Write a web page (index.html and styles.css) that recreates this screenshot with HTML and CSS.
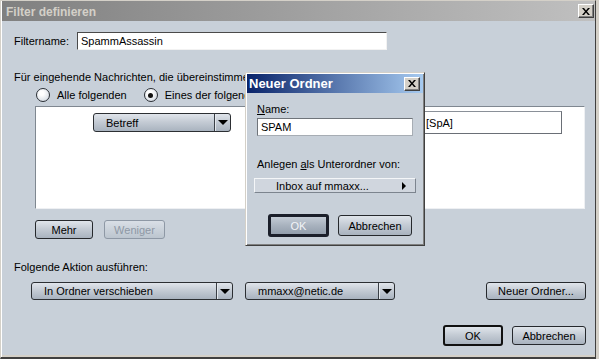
FILE: index.html
```html
<!DOCTYPE html>
<html lang="de">
<head>
    <meta charset="UTF-8">
    <title>Filter definieren</title>
    <link rel="stylesheet" href="styles.css">
</head>
<body>
    <div class="window">
        <div class="titlebar">
            <span class="title">Filter definieren</span>
            <button class="close-btn">
                <svg width="8" height="7" viewBox="0 0 8 7"><path d="M0 0h2l2 2.5L6 0h2L5 3.5 8 7H6L4 4.5 2 7H0l3-3.5z" fill="#000"/></svg>
            </button>
        </div>
        <div class="content">
            <div class="name-row">
                <label class="name-label">Filtername:</label>
                <div class="text-field name-field">SpammAssassin</div>
            </div>
            <p class="intro">Für eingehende Nachrichten, die übereinstimmen:</p>
            <div class="radio-row">
                <span class="radio"></span><span class="radio-label">Alle folgenden</span>
                <span class="radio checked"></span><span class="radio-label">Eines der folgenden</span>
            </div>
            <div class="rule-list">
                <div class="rule-row">
                    <div class="dropdown betreff-drop">
                        <span class="drop-text">Betreff</span>
                        <span class="drop-arrow"></span>
                    </div>
                    <div class="text-field value-field">[SpA]</div>
                </div>
            </div>
            <div class="button-row">
                <button class="btn mehr-btn">Mehr</button>
                <button class="btn weniger-btn disabled">Weniger</button>
            </div>
            <p class="action-label">Folgende Aktion ausführen:</p>
            <div class="action-row">
                <div class="dropdown action-drop">
                    <span class="drop-text">In Ordner verschieben</span>
                    <span class="drop-arrow"></span>
                </div>
                <div class="dropdown account-drop">
                    <span class="drop-text">mmaxx@netic.de</span>
                    <span class="drop-arrow"></span>
                </div>
                <button class="btn new-folder-btn">Neuer Ordner...</button>
            </div>
            <div class="footer">
                <button class="btn default-btn ok-btn">OK</button>
                <button class="btn cancel-btn">Abbrechen</button>
            </div>
        </div>

        <div class="dialog">
            <div class="dialog-titlebar">
                <span class="dialog-title">Neuer Ordner</span>
                <button class="close-btn">
                    <svg width="8" height="7" viewBox="0 0 8 7"><path d="M0 0h2l2 2.5L6 0h2L5 3.5 8 7H6L4 4.5 2 7H0l3-3.5z" fill="#000"/></svg>
                </button>
            </div>
            <div class="dialog-body">
                <p class="dialog-label"><u>N</u>ame:</p>
                <div class="text-field folder-field">SPAM</div>
                <p class="dialog-label parent-label">Anlegen <u>a</u>ls Unterordner von:</p>
                <div class="folder-picker">
                    <span>Inbox auf mmaxx...</span>
                    <span class="picker-arrow"></span>
                </div>
                <div class="dialog-buttons">
                    <button class="btn dialog-ok">OK</button>
                    <button class="btn dialog-cancel">Abbrechen</button>
                </div>
            </div>
        </div>
    </div>
</body>
</html>
```

FILE: styles.css
```css
* {
    box-sizing: border-box;
}
body {
    margin: 0;
    background-color: #d4d0c8;
    font-family: "Liberation Sans", Arial, sans-serif;
    font-size: 11px;
    color: #000;
}
p {
    margin: 0;
}
button {
    font-family: inherit;
    font-size: 11px;
    padding: 0;
    margin: 0;
    color: #000;
}
.window {
    position: relative;
    width: 596px;
    height: 359px;
    padding-left: 1px;
    background-color: #c8d0d9;
    border-style: solid;
    border-width: 1px 1px 2px 1px;
    border-color: #d4d0c8 #404040 #404040 #d4d0c8;
    box-shadow: inset 1px 0 #fff, inset 0 -2px #d4d0c8;
    display: flex;
    flex-direction: column;
}
.titlebar {
    height: 20px;
    display: flex;
    align-items: center;
    justify-content: space-between;
    padding: 0 1px 0 4px;
    background: linear-gradient(to right, #808080, #c0c0c0);
}
.title {
    color: #d4d0c8;
    font-weight: bold;
    font-size: 12px;
    padding-top: 1px;
}
.close-btn {
    width: 16px;
    height: 14px;
    display: flex;
    align-items: center;
    justify-content: center;
    background-color: #d4d0c8;
    border: 1px solid;
    border-color: #fff #404040 #404040 #fff;
    box-shadow: inset -1px -1px #808080;
}
.content {
    display: flex;
    flex-direction: column;
    padding: 0 9px 0 12px;
}
.name-row {
    display: flex;
    align-items: center;
    margin-top: 11px;
    height: 18px;
}
.name-label {
    width: 63px;
}
.text-field {
    background-color: #fff;
    border: 1px solid;
    display: flex;
    align-items: center;
    padding-left: 3px;
    white-space: nowrap;
}
.name-field {
    width: 310px;
    height: 18px;
    border-color: #4a4a4a #f2f2f2 #f2f2f2 #4a4a4a;
}
.intro {
    margin-top: 21px;
    line-height: 13px;
    white-space: nowrap;
}
.radio-row {
    display: flex;
    align-items: center;
    height: 14px;
    margin-top: 4px;
    padding-left: 22px;
}
.radio {
    width: 14px;
    height: 14px;
    border-radius: 50%;
    border: 1px solid #2a2e34;
    background: radial-gradient(circle at 40% 35%, #ffffff 20%, #c9d1db 100%);
    display: flex;
    align-items: center;
    justify-content: center;
}
.radio.checked::after {
    content: "";
    width: 5px;
    height: 5px;
    border-radius: 50%;
    background-color: #111;
}
.radio-label {
    margin-left: 7px;
    margin-right: 17px;
}
.rule-list {
    margin: 4px 0 0 21px;
    width: 550px;
    height: 103px;
    background-color: #fff;
    border: 1px solid;
    border-color: #7f8790 #eef0f3 #eef0f3 #7f8790;
    padding: 4px 22px 0 57px;
}
.rule-row {
    height: 23px;
    display: flex;
    align-items: center;
    justify-content: space-between;
}
.dropdown {
    display: flex;
    align-items: stretch;
    border: 1px solid #2c2f33;
    border-radius: 3px;
    background: linear-gradient(to bottom, #e0e5eb 0%, #c5ccd5 45%, #a9b3bf 100%);
    white-space: nowrap;
}
.drop-text {
    flex: 1;
    display: flex;
    align-items: center;
    padding-left: 12px;
}
.drop-arrow {
    width: 16px;
    display: flex;
    align-items: center;
    justify-content: center;
    border-left: 1px solid #3a3f46;
    box-shadow: inset 1px 0 #e4e8ed;
}
.drop-arrow::after {
    content: "";
    border-left: 5px solid transparent;
    border-right: 5px solid transparent;
    border-top: 5px solid #000;
}
.betreff-drop {
    width: 138px;
    height: 19px;
}
.value-field {
    width: 140px;
    height: 23px;
    border-color: #8a9098 #6a6f76 #6a6f76 #6a6f76;
}
.btn {
    border: 1px solid #26292d;
    border-radius: 3px;
    background: linear-gradient(to bottom, #e0e5eb 0%, #c5ccd5 45%, #a9b3bf 100%);
    height: 19px;
    text-align: center;
}
.button-row {
    display: flex;
    margin: 11px 0 0 21px;
    gap: 11px;
}
.mehr-btn {
    width: 58px;
}
.weniger-btn {
    width: 61px;
}
.btn.disabled {
    border-color: #8e98a5;
    color: #8e98a5;
    background: linear-gradient(to bottom, #d9dfe6, #bcc5cf);
}
.action-label {
    margin-top: 22px;
    line-height: 13px;
}
.action-row {
    display: flex;
    align-items: center;
    height: 18px;
    margin-top: 8px;
    padding-left: 17px;
}
.action-drop {
    width: 202px;
    height: 18px;
}
.account-drop {
    width: 150px;
    height: 18px;
    margin-left: 12px;
}
.new-folder-btn {
    width: 100px;
    height: 18px;
    margin-left: auto;
}
.footer {
    display: flex;
    align-items: center;
    justify-content: flex-end;
    gap: 9px;
    margin-top: 25px;
}
.ok-btn {
    width: 60px;
    height: 21px;
}
.default-btn {
    border: 2px solid #111;
}
.cancel-btn {
    width: 74px;
}

/* Neuer Ordner dialog, lies over the filter window */
.dialog {
    position: absolute;
    left: 244px;
    top: 71px;
    width: 180px;
    height: 174px;
    padding: 1px;
    background-color: #c8d0d9;
    border: 1px solid;
    border-color: #d4d0c8 #404040 #404040 #d4d0c8;
    box-shadow: inset 1px 1px #fff, inset -1px -1px #808080;
}
.dialog-titlebar {
    height: 19px;
    display: flex;
    align-items: center;
    justify-content: space-between;
    padding: 0 3px 0 2px;
    background: linear-gradient(to right, #0a246a, #a6caf0);
}
.dialog-title {
    color: #fff;
    font-weight: bold;
    font-size: 13px;
}
.dialog-body {
    display: flex;
    flex-direction: column;
    padding-left: 10px;
}
.dialog-label {
    margin-top: 10px;
    line-height: 13px;
    white-space: nowrap;
}
.folder-field {
    margin-top: 2px;
    width: 156px;
    height: 18px;
    border-color: #6f747a #a7adb4 #a7adb4 #6f747a;
}
.parent-label {
    margin-top: 22px;
}
.folder-picker {
    margin: 7px 0 0 -3px;
    width: 162px;
    height: 15px;
    display: flex;
    align-items: center;
    justify-content: space-between;
    padding: 0 9px 0 21px;
    background-color: #d0d6de;
    border: 1px solid;
    border-color: #f4f6f8 #7c848e #7c848e #f4f6f8;
}
.picker-arrow {
    border-top: 4px solid transparent;
    border-bottom: 4px solid transparent;
    border-left: 4px solid #000;
}
.dialog-buttons {
    display: flex;
    align-items: center;
    gap: 9px;
    margin: 21px 0 0 11px;
}
.dialog-ok {
    width: 61px;
    height: 23px;
    border: 3px solid #1b1f2a;
    color: #f2f4f7;
    background: linear-gradient(to bottom, #c3cbd5 0%, #a8b2be 50%, #939eac 100%);
}
.dialog-cancel {
    width: 74px;
    height: 21px;
}
```
